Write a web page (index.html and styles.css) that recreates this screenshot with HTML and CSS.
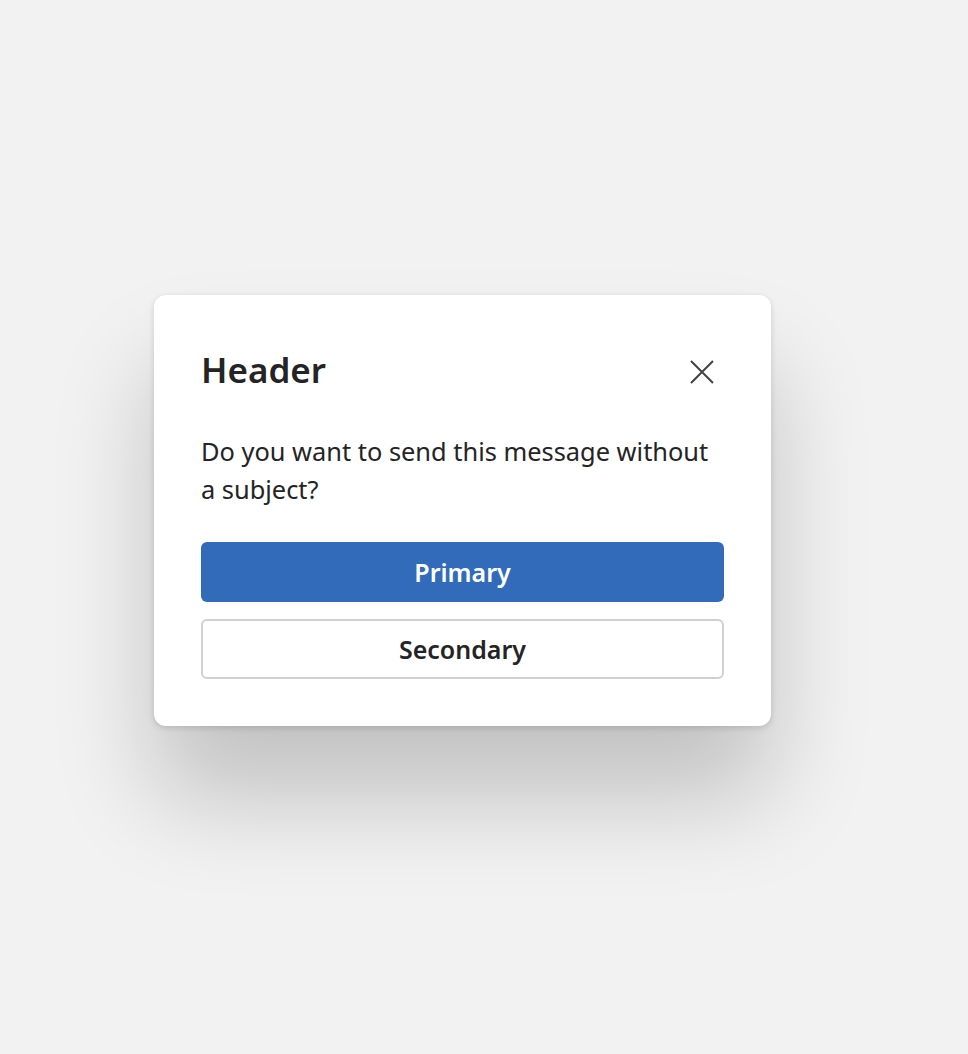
FILE: index.html
```html
<!DOCTYPE html>
<html lang="en">
<head>
    <meta charset="UTF-8">
    <meta name="viewport" content="width=device-width, initial-scale=1.0">
    <title>Dialog</title>
    <link rel="stylesheet" href="styles.css">
</head>
<body>
    <section class="dialog" role="dialog" aria-labelledby="dialog-title">
        <header class="dialog-head">
            <h1 id="dialog-title">Header</h1>
            <button class="close" aria-label="Close">
                <svg width="24" height="24" viewBox="0 0 24 24">
                    <path d="M1 1 L23 23 M23 1 L1 23" stroke="#424242" stroke-width="2" fill="none"/>
                </svg>
            </button>
        </header>
        <p class="dialog-body">Do you want to send this message without a subject?</p>
        <div class="actions">
            <button class="btn primary">Primary</button>
            <button class="btn secondary">Secondary</button>
        </div>
    </section>
</body>
</html>
```

FILE: styles.css
```css
html {
    background-color: #f2f2f2;
}

body {
    margin: 0;
    min-height: 100vh;
    box-sizing: border-box;
    padding: 295px 0 0 154px;
    background-color: #f2f2f2;
    font-family: 'Noto Sans', 'Open Sans', sans-serif;
    color: #242424;
}

.dialog {
    width: 523px;
    padding: 47px;
    background-color: #fff;
    border-radius: 12px;
    box-shadow: 0 72px 100px rgba(0, 0, 0, 0.2), 0 2px 6px rgba(0, 0, 0, 0.14);
}

.dialog-head {
    display: flex;
    justify-content: space-between;
    align-items: center;
    height: 56px;
}

.dialog-head h1 {
    margin: 0;
    font-size: 35px;
    font-weight: 600;
    line-height: 56px;
}

.close {
    border: 0;
    background: none;
    padding: 0;
    margin: 3px 10px 0 0;
    width: 24px;
    height: 24px;
    display: flex;
}

.dialog-body {
    margin: 34px 0 34px;
    font-size: 25.4px;
    line-height: 38px;
}

.actions {
    display: flex;
    flex-direction: column;
    gap: 17px;
}

.btn {
    height: 60px;
    border-radius: 6px;
    font-family: inherit;
    font-size: 25px;
    font-weight: 600;
}

.primary {
    background-color: #316bb9;
    border: 0;
    color: #fff;
}

.secondary {
    background-color: #fff;
    border: 2px solid #d1d1d1;
    color: #242424;
}
```
